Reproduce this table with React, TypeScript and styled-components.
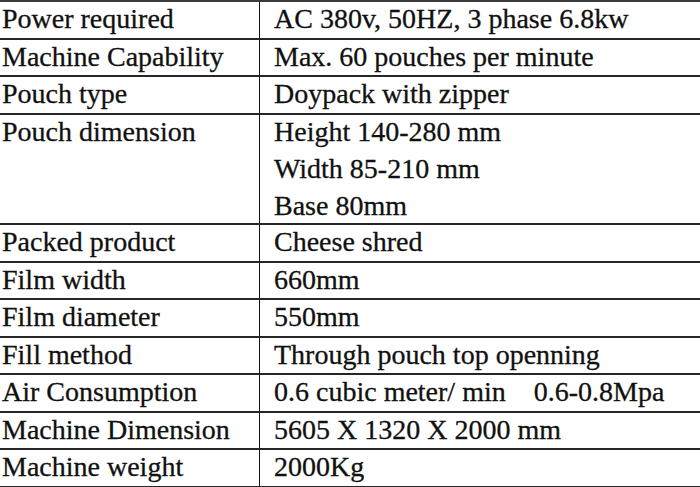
import styled, { createGlobalStyle } from "styled-components";

type Spec = {
	label: string;
	values: string[];
};

const specs: Spec[] = [
	{ label: "Power required", values: ["AC 380v, 50HZ, 3 phase 6.8kw"] },
	{ label: "Machine Capability", values: ["Max. 60 pouches per minute"] },
	{ label: "Pouch type", values: ["Doypack with zipper"] },
	{
		label: "Pouch dimension",
		values: ["Height 140-280 mm", "Width 85-210 mm", "Base 80mm"],
	},
	{ label: "Packed product", values: ["Cheese shred"] },
	{ label: "Film width", values: ["660mm"] },
	{ label: "Film diameter", values: ["550mm"] },
	{ label: "Fill method", values: ["Through pouch top openning"] },
	{
		label: "Air Consumption",
		values: ["0.6 cubic meter/ min    0.6-0.8Mpa"],
	},
	{ label: "Machine Dimension", values: ["5605 X 1320 X 2000 mm"] },
	{ label: "Machine weight", values: ["2000Kg"] },
];

const App = () => {
	return (
		<>
			<GlobalStyle />
			<SpecTable>
				{specs.map((spec) => (
					<SpecRow key={spec.label} $lines={spec.values.length}>
						<LabelCell>{spec.label}</LabelCell>
						<ValueCell>
							{spec.values.map((v) => (
								<ValueLine key={v}>{v}</ValueLine>
							))}
						</ValueCell>
					</SpecRow>
				))}
			</SpecTable>
		</>
	);
};

export default App;

const GlobalStyle = createGlobalStyle`
	html, body {
		margin: 0;
		padding: 0;
		background: #ffffff;
		overflow: hidden;
	}
`;

const SpecTable = styled.div`
	width: 700px;
	height: 487px;
	overflow: hidden;
	border-top: 2px solid #3a3a3a;
	font-family: "Liberation Serif", "Times New Roman", serif;
	font-size: 28px;
	color: #111;
	-webkit-text-stroke: 0.3px #111;
	box-sizing: border-box;
`;

const SpecRow = styled.div<{ $lines: number }>`
	display: grid;
	grid-template-columns: 260px 1fr;
	height: ${(p) => (p.$lines > 1 ? p.$lines * 36.9 : 37.5)}px;
	border-bottom: 2px solid #262626;
	box-sizing: border-box;
`;

const LabelCell = styled.div`
	padding-left: 2px;
	line-height: 33px;
	border-right: 1px solid #111;
	white-space: nowrap;
`;

const ValueCell = styled.div`
	display: flex;
	flex-direction: column;
	padding-left: 14px;
`;

const ValueLine = styled.div`
	line-height: 33px;
	white-space: pre;
	& + & {
		margin-top: 4px;
	}
`;
